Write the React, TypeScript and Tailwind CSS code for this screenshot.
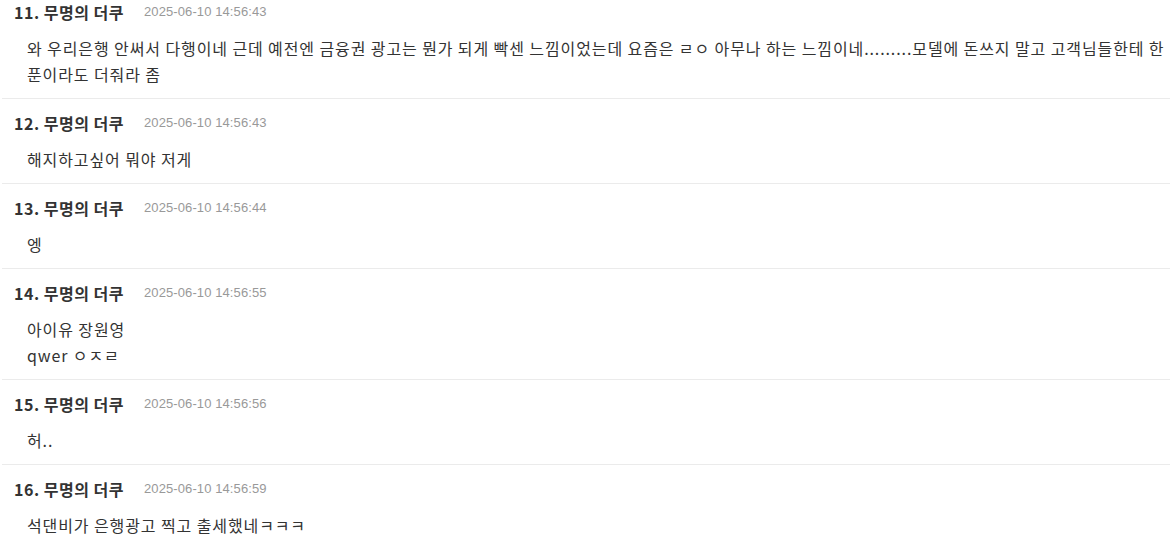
const comments = [
  {
    no: 11,
    time: "2025-06-10 14:56:43",
    lines: [
      "와 우리은행 안써서 다행이네 근데 예전엔 금융권 광고는 뭔가 되게 빡센 느낌이었는데 요즘은 ㄹㅇ 아무나 하는 느낌이네.........모델에 돈쓰지 말고 고객님들한테 한푼이라도 더줘라 좀",
    ],
  },
  { no: 12, time: "2025-06-10 14:56:43", lines: ["해지하고싶어 뭐야 저게"] },
  { no: 13, time: "2025-06-10 14:56:44", lines: ["엥"] },
  { no: 14, time: "2025-06-10 14:56:55", lines: ["아이유 장원영", "qwer ㅇㅈㄹ"] },
  { no: 15, time: "2025-06-10 14:56:56", lines: ["허.."] },
  { no: 16, time: "2025-06-10 14:56:59", lines: ["석댄비가 은행광고 찍고 출세했네ㅋㅋㅋ"] },
]

export default function App() {
  return (
    <div
      className="h-[540px] overflow-hidden bg-white text-[#333]"
      style={{ fontFamily: '"Noto Sans CJK KR", "Noto Sans", sans-serif' }}
    >
      <ul className="ml-[2px] mt-[-12px] w-[1168px]">
        {comments.map((c) => (
          <li key={c.no} className="border-b border-[#ebebeb] pl-[12px] pr-[2px] pt-[11px] pb-[11px]">
            <div className="flex items-center h-[26px]">
              <span className="text-[16px] font-bold text-[#333] leading-[26px] tracking-[0.5px]">
                {c.no}. 무명의 더쿠
              </span>
              <span
                className="ml-[20px] text-[13px] text-[#999] leading-[26px] tracking-[0.1px]"
                style={{ fontFamily: '"Liberation Sans", Arial, sans-serif' }}
              >
                {c.time}
              </span>
            </div>
            <div className="mt-[10px] pl-[13px] text-[16px] leading-[26px] text-[#333] tracking-[0.9px]">
              {c.lines.map((l, i) => (
                <p key={i}>{l}</p>
              ))}
            </div>
          </li>
        ))}
      </ul>
    </div>
  )
}
